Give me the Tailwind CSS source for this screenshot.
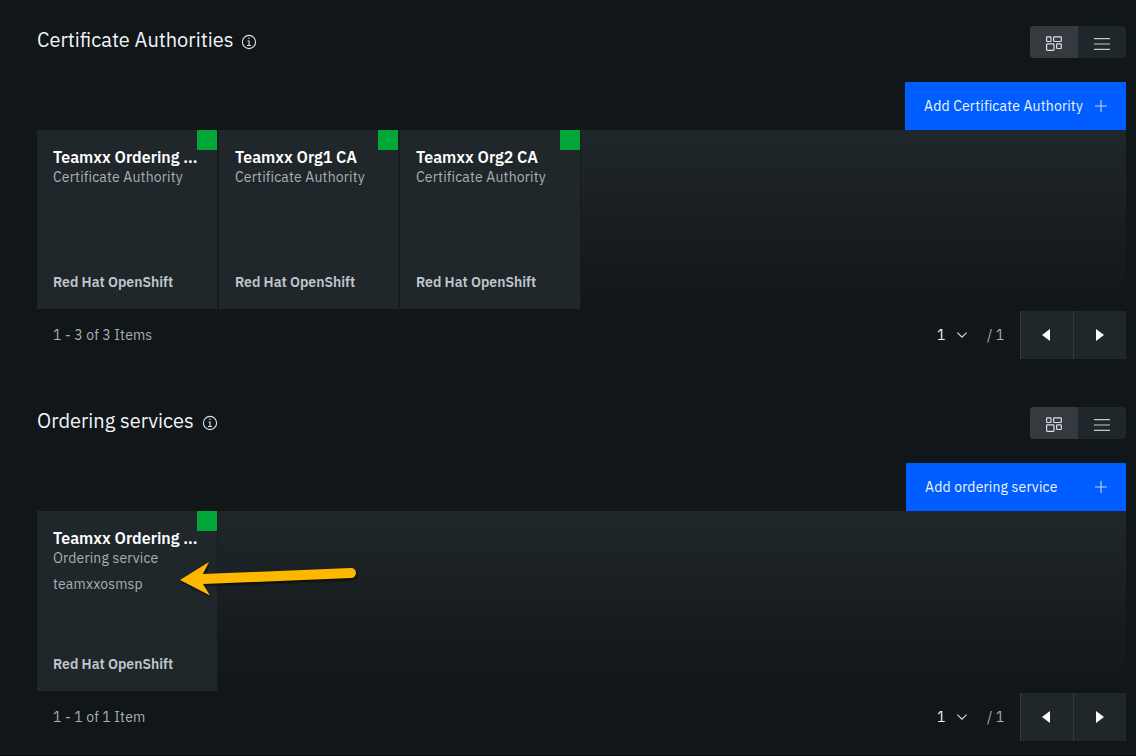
<!DOCTYPE html>
<html lang="en">
<head>
<meta charset="utf-8">
<title>Nodes</title>
<script src="https://cdn.jsdelivr.net/npm/@tailwindcss/browser@4"></script>
</head>
<body class="relative bg-[#111618] font-['IBM_Plex_Sans',Roboto,sans-serif] text-sm text-[#a8afb5] w-[1136px] h-[756px] overflow-hidden border-b border-[#0a0b10]">
<svg class="hidden">
  <symbol id="info" viewBox="0 0 16 16"><circle cx="8" cy="8" r="6.6" fill="none" stroke="currentColor" stroke-width="1.1"/><path d="M8.600 11V6.500h-2.100v1h1V11H6v1h4v-1zM8 3.500A.75.75 0 1 0 8.750 4.250.75.75 0 0 0 8 3.500z" fill="currentColor"/></symbol>
  <symbol id="grid" viewBox="0 0 16 16"><g fill="none" stroke="currentColor" stroke-width="1.2"><rect x=".6" y=".9" width="4.400" height="4.600" rx=".8"/><rect x="7.600" y=".9" width="7.700" height="4.600" rx=".8"/><rect x=".6" y="7.900" width="7.400" height="6.400" rx=".8"/><rect x="10.600" y="7.900" width="4.700" height="4.600" rx=".8"/></g></symbol>
  <symbol id="list" viewBox="0 0 16 12"><path d="M0 .700h16M0 6h16M0 11.300h16" stroke="currentColor" stroke-width="1.200"/></symbol>
  <symbol id="plus" viewBox="0 0 12 12"><path d="M0 6h12M6 0v12" stroke="currentColor" stroke-width="1.100"/></symbol>
  <symbol id="chev" viewBox="0 0 10 6"><path d="M.4.600 5 5.200 9.600.600" fill="none" stroke="currentColor" stroke-width="1.100"/></symbol>
</svg>
<main class="pl-[37px] w-[1126px]">
  <section class="pt-[26px] h-[381px]">
    <header class="flex justify-between h-14">
      <h2 class="flex h-7 text-xl text-[#f2f4f8] leading-7"><span class="w-[204.3px] whitespace-nowrap">Certificate Authorities</span><svg class="w-4 h-4 mt-2 text-[#dde1e6]"><use href="#info"/></svg></h2>
      <div class="flex h-8 rounded bg-[#20272a] overflow-hidden w-24 text-[#dde1e6]">
        <span class="w-12 bg-[#343a3f] flex items-center justify-center"><svg class="w-4 h-4 mt-1 mr-px"><use href="#grid"/></svg></span>
        <span class="w-12 flex items-center justify-center"><svg class="w-4 h-3 mt-1 text-[#c1c7cd]"><use href="#list"/></svg></span>
      </div>
    </header>
    <div class="flex justify-end"><button class="h-12 w-[221px] bg-[#005dff] text-[#f2f4f8] flex items-center justify-between px-[19px]"><span class="whitespace-nowrap tracking-[0.16px]">Add Certificate Authority</span><svg class="w-3 h-3 opacity-80"><use href="#plus"/></svg></button></div>
    <div class="flex gap-0.5 h-[179px] bg-linear-to-b from-[#20272a] to-[#111618]">
      <article class="w-[180px] bg-[#20272a] pl-4 relative flex flex-col"><i class="absolute right-0 top-0 size-5 bg-[#00a637]"></i><h3 class="pt-[17px] text-base leading-5 font-semibold text-white whitespace-nowrap">Teamxx Ordering ...</h3><p class="leading-5 tracking-[0.16px]">Certificate Authority</p><p class="mt-auto mb-[17px] leading-5 font-semibold text-[#c1c7cd]">Red Hat OpenShift</p></article>
      <div class="w-[179px] flex shadow-[-2px_0_0_#161b1e]"><article class="w-full bg-[#20272a] pl-4 relative flex flex-col"><i class="absolute right-0 top-0 size-5 bg-[#00a637]"></i><h3 class="pt-[17px] text-base leading-5 font-semibold text-white whitespace-nowrap">Teamxx Org1 CA</h3><p class="leading-5 tracking-[0.16px]">Certificate Authority</p><p class="mt-auto mb-[17px] leading-5 font-semibold text-[#c1c7cd]">Red Hat OpenShift</p></article></div>
      <div class="w-[180px] flex shadow-[-2px_0_0_#161b1e,1px_0_0_#161b1e]"><article class="w-full bg-[#20272a] pl-4 relative flex flex-col"><i class="absolute right-0 top-0 size-5 bg-[#00a637]"></i><h3 class="pt-[17px] text-base leading-5 font-semibold text-white whitespace-nowrap">Teamxx Org2 CA</h3><p class="leading-5 tracking-[0.16px]">Certificate Authority</p><p class="mt-auto mb-[17px] leading-5 font-semibold text-[#c1c7cd]">Red Hat OpenShift</p></article></div>
    </div>
    <footer class="flex items-center h-12 mt-0.5 pl-4">
      <span class="mr-auto tracking-[0.16px]">1 - 3 of 3 Items</span>
      <span class="text-[#f2f4f8] w-5">1</span><svg class="w-[10px] h-1.5 mr-5 text-[#dde1e6]"><use href="#chev"/></svg><span class="w-[33px]">/ 1</span>
      <span class="w-[53px] h-12 bg-[#20272a] border-l border-[#343a3f] flex items-center justify-center"><svg class="w-2 h-3 mr-0.5" viewBox="0 0 8 12"><path d="M8 0v12L0 6z" fill="white"/></svg></span>
      <span class="w-[53px] h-12 bg-[#20272a] border-l border-[#343a3f] flex items-center justify-center"><svg class="w-2 h-3" viewBox="0 0 8 12"><path d="M0 0v12l8-6z" fill="white"/></svg></span>
    </footer>
  </section>
  <section class="pt-[26px]">
    <header class="flex justify-between h-14">
      <h2 class="flex h-7 text-xl text-[#f2f4f8] leading-7"><span class="w-[165.3px] whitespace-nowrap">Ordering services</span><svg class="w-4 h-4 mt-2 text-[#dde1e6]"><use href="#info"/></svg></h2>
      <div class="flex h-8 rounded bg-[#20272a] overflow-hidden w-24 text-[#dde1e6]">
        <span class="w-12 bg-[#343a3f] flex items-center justify-center"><svg class="w-4 h-4 mt-1 mr-px"><use href="#grid"/></svg></span>
        <span class="w-12 flex items-center justify-center"><svg class="w-4 h-3 mt-1 text-[#c1c7cd]"><use href="#list"/></svg></span>
      </div>
    </header>
    <div class="flex justify-end"><button class="h-12 w-[220px] bg-[#005dff] text-[#f2f4f8] flex items-center justify-between px-[19px]"><span class="whitespace-nowrap tracking-[0.16px]">Add ordering service</span><svg class="w-3 h-3 opacity-80"><use href="#plus"/></svg></button></div>
    <div class="flex h-[180px] bg-linear-to-b from-[#20272a] to-[#111618]">
      <div class="w-[180px] flex shadow-[1px_0_0_#161b1e]"><article class="w-full bg-[#20272a] pl-4 relative flex flex-col"><i class="absolute right-0 top-0 size-5 bg-[#00a637]"></i><h3 class="pt-[17px] text-base leading-5 font-semibold text-white whitespace-nowrap">Teamxx Ordering ...</h3><p class="leading-5 tracking-[0.16px]">Ordering service</p><p class="mt-1.5 leading-5 tracking-[0.16px]">teamxxosmsp</p><p class="mt-auto mb-[17px] leading-5 font-semibold text-[#c1c7cd]">Red Hat OpenShift</p></article></div>
    </div>
    <footer class="flex items-center h-12 mt-0.5 pl-4">
      <span class="mr-auto tracking-[0.16px]">1 - 1 of 1 Item</span>
      <span class="text-[#f2f4f8] w-5">1</span><svg class="w-[10px] h-1.5 mr-5 text-[#dde1e6]"><use href="#chev"/></svg><span class="w-[33px]">/ 1</span>
      <span class="w-[53px] h-12 bg-[#20272a] border-l border-[#343a3f] flex items-center justify-center"><svg class="w-2 h-3 mr-0.5" viewBox="0 0 8 12"><path d="M8 0v12L0 6z" fill="white"/></svg></span>
      <span class="w-[53px] h-12 bg-[#20272a] border-l border-[#343a3f] flex items-center justify-center"><svg class="w-2 h-3" viewBox="0 0 8 12"><path d="M0 0v12l8-6z" fill="white"/></svg></span>
    </footer>
  </section>
</main>
<svg class="absolute left-[170px] top-[550px] w-[200px] h-[60px] drop-shadow-[1px_2px_1px_rgba(0,0,0,0.6)]" viewBox="170 550 200 60"><path d="M180 580 209 562 202.800 574 350.800 568a5 5 0 0 1 .4 10L203 584 210 595.500z" fill="#ffb800"/></svg>
</body>
</html>
